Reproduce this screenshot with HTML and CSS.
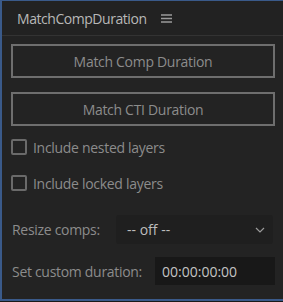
FILE: index.html
```html
<!DOCTYPE html>
<html lang="en">
<head>
    <meta charset="UTF-8">
    <title>MatchCompDuration</title>
    <link rel="stylesheet" href="styles.css">
</head>
<body>
    <div class="panel">
        <div class="panel-header">
            <span class="panel-title">MatchCompDuration</span>
            <span class="menu-icon">
                <svg width="11" height="9" viewBox="0 0 11 9"><path d="M0 1h11M0 4.5h11M0 8h11" stroke="#9a9a9a" stroke-width="1.3"/></svg>
            </span>
        </div>
        <div class="panel-body">
            <button class="action-btn">Match Comp Duration</button>
            <button class="action-btn">Match CTI Duration</button>
            <label class="check-row"><span class="check-box"></span>Include nested layers</label>
            <label class="check-row"><span class="check-box"></span>Include locked layers</label>
            <div class="field-row">
                <span class="field-label resize-label">Resize comps:</span>
                <div class="select-box">
                    <span>-- off --</span>
                    <svg width="10" height="6" viewBox="0 0 10 6"><path d="M1 1l4 4 4-4" fill="none" stroke="#9a9a9a" stroke-width="1.2"/></svg>
                </div>
            </div>
            <div class="field-row">
                <span class="field-label duration-label">Set custom duration:</span>
                <div class="text-input">00:00:00:00</div>
            </div>
        </div>
    </div>
</body>
</html>
```

FILE: styles.css
```css
* { margin: 0; padding: 0; box-sizing: border-box; }
body {
    background-color: #1a1a1a;
    font-family: 'Open Sans', sans-serif;
    width: 283px;
    height: 302px;
    overflow: hidden;
}
.panel {
    width: 283px;
    height: 301px;
    background-color: #232323;
    border-top: 1px solid #3a5a8a;
    border-left: 2px solid #3a5a8a;
    border-bottom: 2px solid #3a5a8a;
}
.panel-header {
    height: 35px;
    display: flex;
    align-items: center;
    padding-left: 15px;
    border-bottom: 1px solid #333;
    background-color: #222;
}
.panel-title {
    color: #b8b8b8;
    font-size: 14px;
    letter-spacing: -0.45px;
}
.menu-icon { display: flex; margin-left: 14px; }
.panel-body {
    padding: 8px 8px 0 9px;
    display: flex;
    flex-direction: column;
}
.action-btn {
    height: 34px;
    margin-bottom: 14px;
    border: 2px solid #6e6e6e;
    background-color: #232323;
    color: #8c8c8c;
    font-family: 'Open Sans', sans-serif;
    font-size: 14px;
    letter-spacing: -0.3px;
}
.check-row {
    display: flex;
    align-items: center;
    color: #8c8c8c;
    font-size: 14px;
    letter-spacing: -0.3px;
    height: 16px;
    margin-bottom: 21px;
    margin-top: -1px;
}
.check-box {
    width: 16px;
    height: 16px;
    border: 2px solid #6a6a6a;
    border-radius: 2px;
    margin-right: 6px;
}
.field-row {
    display: flex;
    align-items: center;
    margin-bottom: 13px;
}
.field-row:first-of-type { margin-top: 3px; }
.field-label {
    color: #8c8c8c;
    font-size: 14px;
    letter-spacing: -0.3px;
    padding-left: 1px;
    white-space: nowrap;
    flex-shrink: 0;
}
.resize-label { width: 105px; }
.duration-label { width: 144px; }
.select-box {
    width: 157px;
    height: 29px;
    background-color: #1f1f1f;
    border-radius: 3px;
    display: flex;
    align-items: center;
    justify-content: space-between;
    padding: 0 8px 0 11px;
    color: #bdbdbd;
    font-size: 14px;
}
.text-input {
    width: 120px;
    height: 28px;
    background-color: #181818;
    display: flex;
    align-items: center;
    padding-left: 7px;
    color: #c4c4c4;
    font-size: 14px;
}
```
